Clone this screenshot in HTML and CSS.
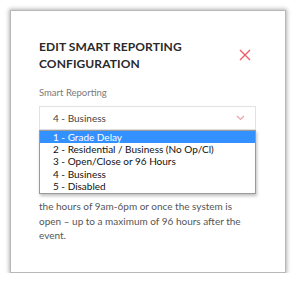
FILE: index.html
```html
<!DOCTYPE html>
<html lang="en">
<head>
  <meta charset="UTF-8" />
  <title>Edit Smart Reporting Configuration</title>
  <link rel="stylesheet" href="styles.css">
</head>
<body>

  <div class="modal">
    <div class="modal-head">
      <h2 class="modal-title">EDIT SMART REPORTING<br>CONFIGURATION</h2>
      <button class="close-btn" aria-label="Close">
        <svg width="12" height="12" viewBox="0 0 12 12">
          <path d="M1 1 L11 11 M11 1 L1 11" stroke="#ec5a66" stroke-width="1.3" fill="none"/>
        </svg>
      </button>
    </div>

    <label class="field-label">Smart Reporting</label>
    <div class="select-wrap">
      <div class="select-box">
        <span>4 - Business</span>
        <svg class="chevron" width="9" height="6" viewBox="0 0 9 6">
          <path d="M1 1 L4.5 4.5 L8 1" stroke="#f0a0a8" stroke-width="1.2" fill="none"/>
        </svg>
      </div>
      <ul class="options">
        <li class="active">1 - Grade Delay</li>
        <li>2 - Residential / Business (No Op/Cl)</li>
        <li>3 - Open/Close or 96 Hours</li>
        <li>4 - Business</li>
        <li>5 - Disabled</li>
      </ul>
    </div>

    <p class="desc">
      the hours of 9am-6pm or once the system is<br>
      open – up to a maximum of 96 hours after the<br>
      event.
    </p>
  </div>

</body>
</html>
```

FILE: styles.css
```css
body {
  margin: 0;
  background: #fff;
  font-family: Lato, "Open Sans", sans-serif;
}

.modal {
  box-sizing: border-box;
  margin: 10px 0 0 10px;
  width: 276px;
  height: 263px;
  border: 1px solid #b8b8b8;
  box-shadow: 0 0 4px 1px rgba(0,0,0,0.3);
  padding: 0 29px 0 28px;
}

.modal-head {
  display: flex;
  justify-content: space-between;
  align-items: center;
  padding-top: 27px;
}

.modal-title {
  margin: 0;
  font-size: 12px;
  line-height: 17px;
  font-weight: bold;
  color: #2a2a2a;
  letter-spacing: 0.1px;
}

.close-btn {
  background: none;
  border: none;
  padding: 0;
  margin-right: 5px;
  display: flex;
}

.field-label {
  display: block;
  margin-top: 15px;
  font-size: 9.5px;
  color: #7a7a7a;
}

.select-wrap {
  position: relative;
  margin-top: 8px;
}

.select-box {
  display: flex;
  justify-content: space-between;
  align-items: center;
  height: 24px;
  box-sizing: border-box;
  border: 1px solid #e2e2e2;
  padding: 0 10px 0 13px;
  font-size: 10px;
  color: #444;
}

.options {
  position: absolute;
  top: 24px;
  left: 0;
  right: 0;
  margin: 0;
  padding: 0 0 1px;
  list-style: none;
  background: #fff;
  border: 1px solid #9a9a9a;
  box-shadow: 1px 2px 3px rgba(0,0,0,0.25);
  font-size: 10px;
  color: #111;
}

.options li {
  height: 12.2px;
  line-height: 12px;
  padding-left: 13px;
}

.options li.active {
  background: #3391ff;
  color: #fff;
}

.desc {
  margin: 69px 0 0;
  font-size: 10px;
  line-height: 14.5px;
  color: #555;
}
```
